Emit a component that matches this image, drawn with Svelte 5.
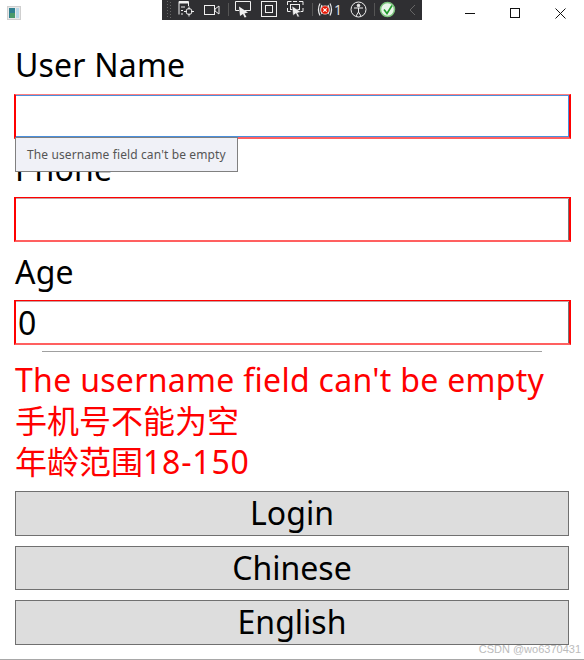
<script>
  const buttons = ["Login", "Chinese", "English"];
</script>

<div class="window">
  <header class="titlebar">
    <svg class="appicon" width="14" height="14" viewBox="0 0 14 14">
      <rect x="0.5" y="0.5" width="13" height="13" fill="#e8e8e8" stroke="#cfcfcf"/>
      <rect x="2" y="2" width="6" height="10" fill="#2f7f8f"/>
      <rect x="3" y="7" width="5" height="5" fill="#4a9a6a"/>
      <rect x="9" y="2" width="3" height="10" fill="#b8d8e8"/>
    </svg>
    <div class="toolbar">
      <svg width="260" height="20" viewBox="0 0 260 20" fill="none" stroke="#f0f0f0" stroke-width="1">
        <path d="M5.500 1v18M8.500 2v17" stroke="#666" stroke-dasharray="1 2"/>
        <path d="M17 14.500V1.500h9.500v4.500" /><path d="M17 2.500h9" stroke-width="2"/>
        <path d="M19 7h4M19 10.500h2M19 14h2"/>
        <circle cx="27" cy="11.500" r="3"/><path d="M27 6.500v3M27 13.500v3M22 11.500h3M29 11.500h3" />
        <rect x="42.500" y="5.500" width="10" height="9"/><path d="M53 9l4-3v8l-4-3z"/>
        <path d="M66.500 3v13" stroke="#555"/>
        <path d="M77 10.500h-3.500V1.500h15v9h-6"/><path d="M77 6l9 6-3.500 1 2 3.500-2 .5-1.500-3.500-3 2z" fill="#f0f0f0" stroke="none" transform="translate(0 .5)"/>
        <rect x="99.500" y="1.500" width="15" height="15"/><rect x="103.500" y="5.500" width="7" height="7"/>
        <path d="M125.500 5V1.500h4M137 1.500h4V5M141 8v3.500h-3M125.500 8v3.500h3M131 1.500h4"/>
        <rect x="128.500" y="4.500" width="9" height="5"/><path d="M130 6l9 6-3.500 1 2 3.500-2 .5-1.500-3.500-3 2z" fill="#f0f0f0" stroke="#2d2d30" stroke-width=".5"/>
        <path d="M150.500 3v13" stroke="#555"/>
        <path d="M158 4q-3 6 0 12M160 5.500q-2 4.500 0 9M168 4q3 6 0 12M166 5.500q2 4.500 0 9" stroke="#e8e8e8" stroke-width="1.200" transform="translate(0 -.5)"/>
        <circle cx="163" cy="10" r="4.200" fill="#e51400" stroke="#fff" stroke-width=".6"/><path d="M161.300 8.300l3.400 3.400M164.700 8.300l-3.400 3.400" stroke="#fff" stroke-width="1.200"/>
        <text x="172" y="15" class="count">1</text>
        <circle cx="196.500" cy="9.500" r="7.500"/><circle cx="196.500" cy="5.500" r="1.300" fill="#f0f0f0"/><path d="M192 8h9M196.500 8v4M196.500 12l-2.500 4M196.500 12l2.500 4"/>
        <path d="M212.500 3v13" stroke="#555"/>
        <circle cx="225.500" cy="9.500" r="7" fill="#e9f5e9" stroke="#7cc47c" stroke-width="1.500"/><path d="M222 9.500l3 4 5-8" stroke="#1f9a2a" stroke-width="1.600"/>
        <path d="M253 5l-5 5 5 5" stroke="#666"/>
      </svg>
    </div>
    <div class="controls">
      <svg width="10" height="10" viewBox="0 0 10 10"><path d="M0 5.500h10" stroke="#111"/></svg>
      <svg width="10" height="10" viewBox="0 0 10 10" fill="none"><rect x=".5" y=".5" width="9" height="9" stroke="#111"/></svg>
      <svg width="11" height="11" viewBox="0 0 11 11"><path d="M.5.500l10 10M10.500.500l-10 10" stroke="#111"/></svg>
    </div>
  </header>

  <main class="form">
    <label class="field first">
      <span class="label">User Name</span>
      <span class="box focused"></span>
      <span class="tooltip">The username field can't be empty</span>
    </label>
    <label class="field">
      <span class="label">Phone</span>
      <span class="box"></span>
    </label>
    <label class="field">
      <span class="label">Age</span>
      <span class="box">0</span>
    </label>
    <hr class="rule" />
    <ul class="errors">
      <li class="latin">The username field can't be empty</li>
      <li>手机号不能为空</li>
      <li>年龄范围<span class="digits">18-150</span></li>
    </ul>
    <div class="actions">
      {#each buttons as b}<button type="button">{b}</button>{/each}
    </div>
  </main>
  <div class="watermark">CSDN @wo6370431</div>
</div>

<style>
  :global(body) { margin: 0; background: #fff; }
  .window {
    position: relative;
    width: 584px;
    height: 660px;
    box-sizing: border-box;
    border-bottom: 1px solid #a8a8a8;
    overflow: hidden;
    font-family: "Noto Sans", "Noto Sans CJK SC", sans-serif;
    color: #000;
  }
  .titlebar {
    position: relative;
    height: 30px;
  }
  .appicon { position: absolute; left: 7px; top: 6px; }
  .toolbar {
    position: absolute;
    left: 162px;
    top: 0;
    width: 260px;
    height: 20px;
    background: #2f2f32;
  }
  .toolbar svg { display: block; }
  .count { font: 14px "Noto Sans", sans-serif; fill: #ddd; stroke: none; }
  .controls {
    position: absolute;
    left: 0; right: 0; top: 8px;
    display: flex;
    justify-content: flex-end;
    gap: 35px;
    padding-right: 18px;
  }
  .form {
    padding: 0 15px;
    display: flex;
    flex-direction: column;
  }
  .field { position: relative; display: flex; flex-direction: column; }
  .label {
    font-size: 32px;
    line-height: 43px;
    height: 43px;
    margin-top: 8px;
    margin-bottom: 7px;
    letter-spacing: .2px;
  }
  .first .label { margin-top: 13px; margin-bottom: 8px; }
  .box {
    box-sizing: border-box;
    height: 45px;
    margin: 0 -2px 0 -1px;
    border-style: solid;
    border-width: 1px 2px 2px 2px;
    border-color: #f00 #f00 #ff6060 #f00;
    box-shadow: inset 0 1px 0 #c8a0a0, inset -1px 0 0 #777;
    font-size: 32px;
    line-height: 44px;
    padding-left: 2px;
    background: #fff;
  }
  .box.focused {
    border-top-color: #ff8080;
    box-shadow: inset 0 1px 0 #4a8fdc, inset -1px 0 0 #4a8fdc, inset 0 -1px 0 #4a8fdc;
  }
  .tooltip {
    position: absolute;
    z-index: 2;
    left: 0;
    top: 107px;
    box-sizing: border-box;
    width: 223px;
    height: 35px;
    background: #f0f1f7;
    border: 1px solid #808080;
    color: #555;
    font-size: 12px;
    letter-spacing: .12px;
    line-height: 33px;
    padding-left: 11px;
    white-space: nowrap;
  }
  .rule {
    width: 500px;
    margin: 6px 0 0 27px;
    border: 0;
    border-top: 1px solid #a0a0a0;
    height: 0;
  }
  .errors {
    list-style: none;
    margin: 7px 0 0;
    padding: 0;
    color: #f00;
    font-size: 32px;
    line-height: 41px;
    white-space: nowrap;
  }
  .latin { letter-spacing: .3px; }
  .digits { letter-spacing: .8px; }
  .actions {
    display: flex;
    flex-direction: column;
    gap: 10px;
    margin-top: 9px;
  }
  button {
    box-sizing: border-box;
    height: 44.5px;
    border: 1px solid #707070;
    background: #ddd;
    font: inherit;
    font-size: 32px;
    line-height: 42px;
    padding: 0;
    color: #000;
  }
  .watermark {
    position: absolute;
    right: 3px;
    bottom: 4px;
    font-size: 11px;
    color: #b5b5b5;
    font-family: "Liberation Sans", sans-serif;
    opacity: .9;
  }
</style>
